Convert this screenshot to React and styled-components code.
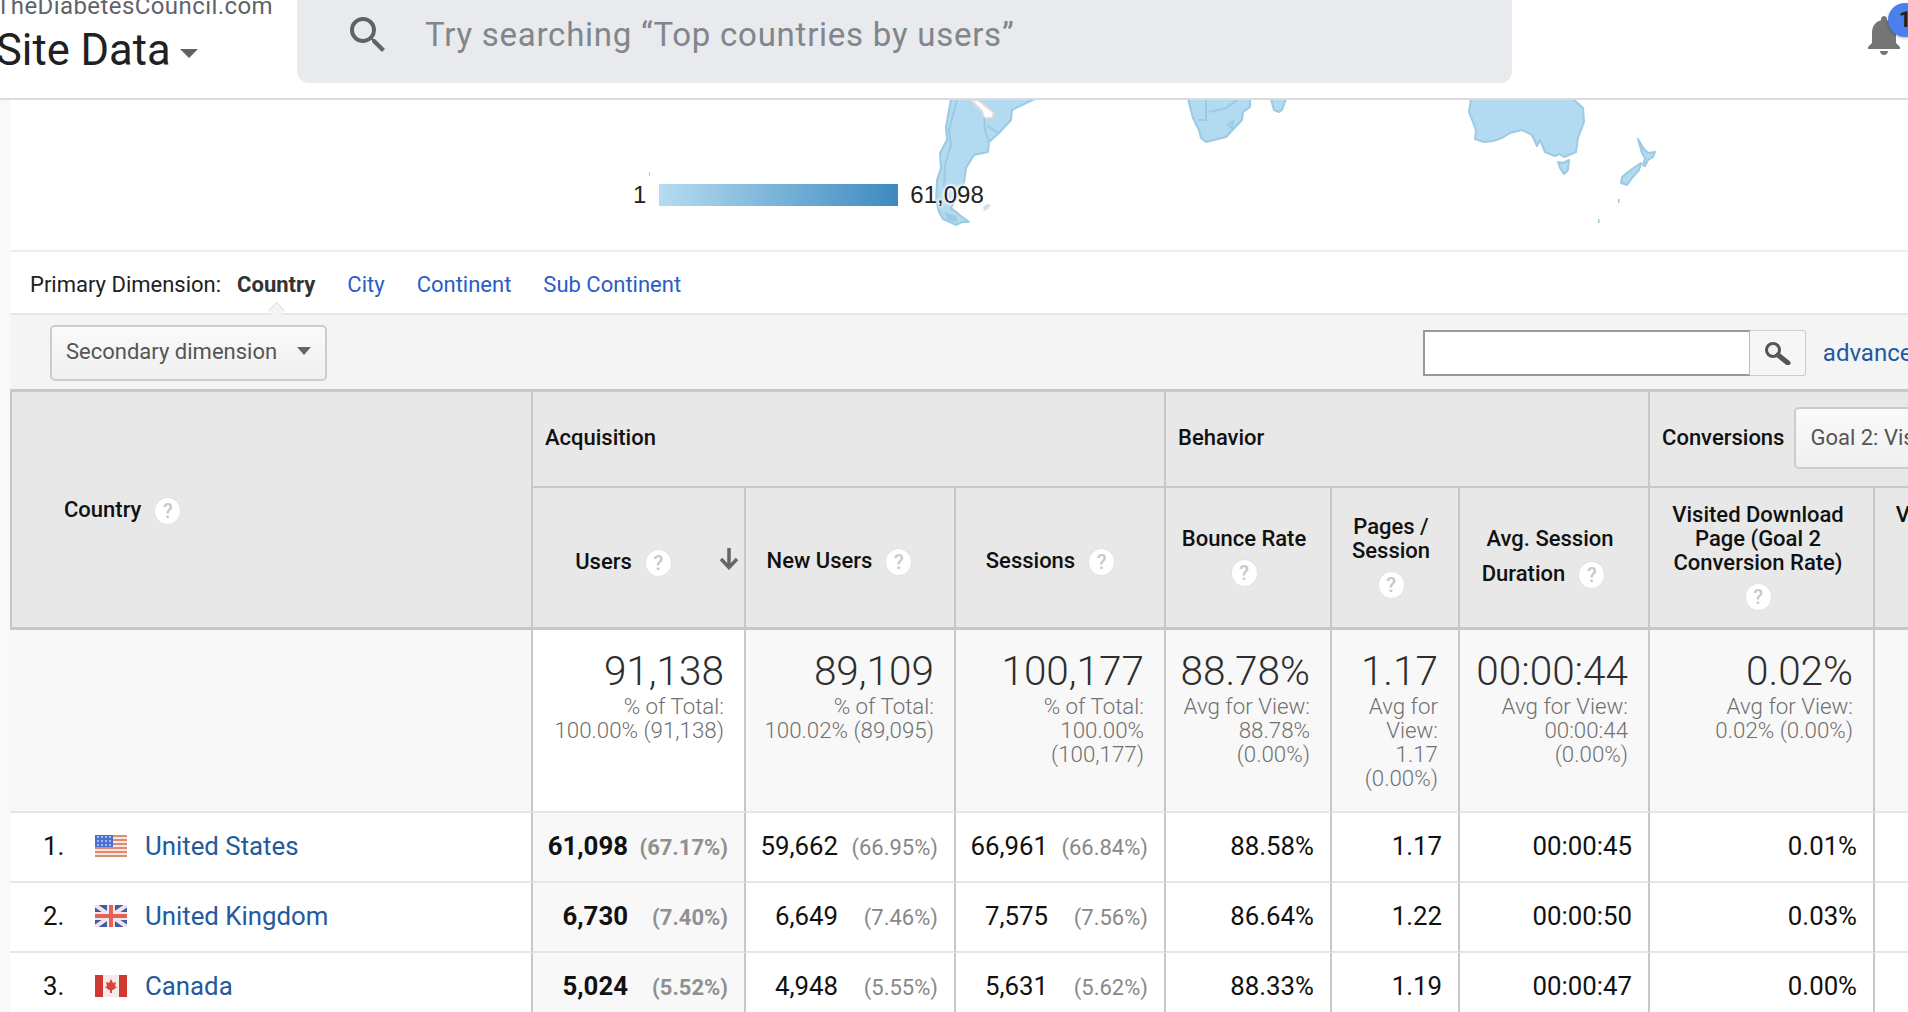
import styled, { createGlobalStyle } from "styled-components";

const GlobalStyle = createGlobalStyle`
  html, body {
    margin: 0;
    padding: 0;
    background: #fff;
    font-family: Roboto, "Liberation Sans", sans-serif;
    color: #212121;
  }
  #root {
    width: 1908px;
    height: 1012px;
    overflow: hidden;
  }
`;

const Header = styled.header`
  width: 1908px;
  height: 100px;
  box-sizing: border-box;
  border-bottom: 2px solid #dadce0;
  display: flex;
  align-items: flex-start;
  overflow: hidden;
`;

const Brand = styled.div`
  width: 297px;
  flex-shrink: 0;
  margin-left: -4px;
  margin-top: -8px;
`;

const Account = styled.div`
  font-size: 24px;
  line-height: 28px;
  color: #5f6368;
  letter-spacing: 0.42px;
  white-space: nowrap;
`;

const PropertyName = styled.div`
  display: flex;
  align-items: center;
  gap: 9px;
  font-size: 43.5px;
  line-height: 50px;
  margin-top: 6px;
  color: #212121;
  white-space: nowrap;
`;

const HeaderCaret = styled.span`
  width: 0;
  height: 0;
  margin-top: 4px;
  border-left: 9px solid transparent;
  border-right: 9px solid transparent;
  border-top: 9px solid #5f6368;
`;

const SearchBar = styled.div`
  width: 1215px;
  height: 83px;
  flex-shrink: 0;
  margin-left: 4px;
  box-sizing: border-box;
  padding: 0 0 14px 47px;
  background: #e8eaed;
  border-radius: 0 0 12px 12px;
  display: flex;
  align-items: center;
  gap: 33px;
  font-size: 33px;
  letter-spacing: 0.75px;
  color: #80868b;
  svg {
    width: 48px;
    height: 48px;
    fill: #5f6368;
  }
`;

const Bell = styled.div`
  position: relative;
  margin-left: 348px;
  margin-top: 11px;
  svg {
    display: block;
    width: 48px;
    height: 48px;
    fill: #757575;
  }
`;

const Badge = styled.span`
  position: absolute;
  left: 28px;
  top: -8px;
  width: 34px;
  height: 34px;
  border-radius: 50%;
  background: #4a80ec;
  box-shadow: 0 1px 3px rgba(0, 0, 0, 0.3);
  font-size: 22px;
  font-weight: 700;
  line-height: 34px;
  text-align: center;
  color: #202124;
`;

const Body = styled.div`
  display: flex;
`;

const Strip = styled.div`
  width: 10px;
  flex-shrink: 0;
  background: #f8f9fa;
`;

const Main = styled.main`
  width: 2090px;
  flex-shrink: 0;
`;

const MapSection = styled.section`
  position: relative;
  height: 150px;
  border-bottom: 2px solid #eeeeee;
  svg {
    display: block;
  }
`;

const Legend = styled.div`
  position: absolute;
  left: 623px;
  top: 84px;
  display: flex;
  align-items: center;
  font-family: "Liberation Sans", Arial, sans-serif;
  font-size: 24px;
  line-height: 22px;
  color: #222;
  text-shadow: 0 0 3px #fff, 0 0 3px #fff, 0 0 4px #fff, 0 0 5px #fff;
`;

const LegendBar = styled.div`
  width: 239px;
  height: 22px;
  margin: 0 12px 0 13px;
  background: linear-gradient(to right, #b5dcf0, #3d8ac0);
`;

const DimensionTabs = styled.nav`
  position: relative;
  height: 63px;
  width: 1898px;
  box-sizing: border-box;
  padding: 3px 0 0 20px;
  border-bottom: 2px solid #e6e6e6;
  display: flex;
  align-items: center;
  font-size: 22px;
`;

const DimensionLabel = styled.span`
  color: #212121;
  margin-right: 16px;
`;

const ActiveDimension = styled.span`
  position: relative;
  font-weight: 700;
  color: #333;
  margin-right: 32px;
  &::after {
    content: "";
    position: absolute;
    left: 50%;
    bottom: -21px;
    width: 14px;
    height: 14px;
    margin-left: -7px;
    background: #f4f4f4;
    border-left: 1px solid #d8d8d8;
    border-top: 1px solid #d8d8d8;
    transform: rotate(45deg) scale(0.8);
  }
`;

const DimensionLink = styled.a`
  color: #2a5cc8;
  margin-right: 32px;
`;

const Toolbar = styled.div`
  height: 74px;
  box-sizing: border-box;
  padding: 0 174px 0 40px;
  background: #f4f4f4;
  display: flex;
  align-items: center;
  justify-content: space-between;
`;

const DropButton = styled.div`
  display: flex;
  align-items: center;
  justify-content: space-between;
  box-sizing: border-box;
  background: linear-gradient(#fafafa, #f0f0f0);
  border: 2px solid #cccccc;
  border-radius: 5px;
  color: #555;
  font-size: 22px;
  white-space: nowrap;
`;

const SecondaryDrop = styled(DropButton)`
  width: 277px;
  height: 56px;
  padding: 0 14px 3px;
  margin-top: 1px;
`;

const GoalDrop = styled(DropButton)`
  width: 400px;
  height: 62px;
  padding: 0 14px;
  font-weight: 400;
`;

const DropCaret = styled.span`
  width: 0;
  height: 0;
  border-left: 7px solid transparent;
  border-right: 7px solid transparent;
  border-top: 8px solid #666;
`;

const TableSearch = styled.div`
  display: flex;
  align-items: center;
  margin-top: 2px;
`;

const SearchInput = styled.div`
  width: 327px;
  height: 46px;
  box-sizing: border-box;
  background: #fff;
  border: 2px solid #999;
  border-right: 1px solid #bbb;
`;

const SearchButton = styled.div`
  width: 56px;
  height: 46px;
  box-sizing: border-box;
  background: #f6f6f6;
  border: 1px solid #ccc;
  border-left: none;
  border-radius: 0 3px 3px 0;
  display: flex;
  align-items: center;
  justify-content: center;
`;

const Advanced = styled.a`
  margin-left: 17px;
  font-size: 24px;
  color: #1f5a9e;
`;

const Table = styled.table`
  width: 2080px;
  table-layout: fixed;
  border-collapse: separate;
  border-spacing: 0;
`;

const Help = styled.span`
  display: inline-block;
  vertical-align: middle;
  width: 27px;
  height: 28px;
  margin: 8px 13px;
  border-radius: 50%;
  background: #fff;
  border: 1px solid #e2e2e2;
  box-sizing: border-box;
  color: #c8c8c8;
  font-size: 20px;
  font-weight: 500;
  line-height: 26px;
  text-align: center;
`;

const HeadCell = styled.th`
  box-sizing: border-box;
  background: #e8e8e8;
  border-right: 2px solid #c8c8c8;
  border-bottom: 2px solid #c8c8c8;
  font-size: 22px;
  font-weight: 500;
  line-height: 24px;
  color: #111;
  padding: 0 16px;
  text-align: center;
  vertical-align: middle;
  position: relative;
`;

const CountryHead = styled(HeadCell)`
  border-left: 2px solid #c8c8c8;
  border-top: 3px solid #c8c8c8;
  border-bottom-width: 3px;
  text-align: left;
  padding: 3px 0 0 52px;
`;

const GroupHead = styled(HeadCell)`
  border-top: 3px solid #c8c8c8;
  text-align: left;
  padding: 0 0 2px 12px;
  height: 99px;
`;

const GroupInner = styled.div`
  display: flex;
  align-items: center;
  gap: 10px;
  white-space: nowrap;
`;

const MetricHead = styled(HeadCell)`
  height: 142px;
  border-bottom-width: 3px;
  padding: ${(p) => p.$top || 7}px ${(p) => p.$right || 14}px 0 ${(p) => p.$left || 14}px;
`;

const LooseMetricHead = styled(MetricHead)`
  ${Help} {
    margin-top: 10px;
    margin-bottom: 10px;
  }
`;

const SortArrow = styled.svg`
  position: absolute;
  right: 5px;
  top: 59px;
  width: 20px;
  height: 23px;
  fill: none;
  stroke: #666;
  stroke-width: 3.5;
`;

const TotalCell = styled.td`
  box-sizing: border-box;
  height: 183px;
  padding: 19px 20px 0 8px;
  background: ${(p) => (p.$white ? "#fff" : "#f8f8f8")};
  border-right: 2px solid #c8c8c8;
  border-bottom: 2px solid #e6e6e6;
  vertical-align: top;
  text-align: right;
`;

const BlankCell = styled(TotalCell)`
  border-right: none;
`;

const TotalValue = styled.div`
  font-size: 40.5px;
  font-weight: 300;
  line-height: 45px;
  color: #2e2e2e;
  white-space: nowrap;
`;

const TotalNote = styled.div`
  font-size: 22.3px;
  font-weight: 300;
  line-height: 24px;
  color: #707070;
`;

const DataCell = styled.td`
  box-sizing: border-box;
  height: 70px;
  padding: 0 16px 2px 8px;
  background: ${(p) => (p.$sorted ? "#f8f8f8" : "#fff")};
  border-right: 2px solid #c8c8c8;
  border-bottom: 2px solid #e6e6e6;
  font-size: 25.8px;
  font-weight: ${(p) => (p.$sorted ? 700 : 400)};
  text-align: right;
  color: #111;
  white-space: nowrap;
`;

const Share = styled.span`
  display: inline-block;
  width: ${(p) => (p.$sorted ? 100 : 100)}px;
  font-size: 22px;
  font-weight: ${(p) => (p.$sorted ? 700 : 400)};
  color: ${(p) => (p.$sorted ? "#909090" : "#888")};
`;

const CountryCell = styled.td`
  box-sizing: border-box;
  height: 70px;
  padding: 0 0 2px 33px;
  border-right: 2px solid #c8c8c8;
  border-bottom: 2px solid #e6e6e6;
`;

const CountryInner = styled.div`
  display: flex;
  align-items: center;
  font-size: 25.8px;
`;

const RowNumber = styled.span`
  width: 52px;
  color: #111;
`;

const Flag = styled.svg`
  width: 32px;
  height: 22px;
  margin-right: 18px;
  filter: blur(0.7px);
`;

const CountryLink = styled.a`
  color: #235a9c;
`;

function SearchGlyph() {
  return (
    <svg viewBox="0 0 24 24">
      <path d="M15.5 14h-.79l-.28-.27A6.47 6.47 0 0 0 16 9.5 6.5 6.5 0 1 0 9.5 16c1.61 0 3.09-.59 4.23-1.57l.27.28v.79l5 4.99L20.49 19l-4.99-5zm-6 0C7.01 14 5 11.99 5 9.5S7.01 5 9.5 5 14 7.01 14 9.5 11.99 14 9.5 14z" />
    </svg>
  );
}

function WorldMap() {
  return (
    <svg width="1898" height="150" viewBox="10 100 1898 150">
      <g fill="#b2daf0" stroke="#9ccae2" strokeWidth="2" strokeLinejoin="round">
        <path d="M951 99 L946 127 L947 140 L940 153 L941 168 L937 180 L936 200 L939 212 L943 219 L950 222 L956 225 L962 222 L969 222 L961 216 L951 208 L962 188 L964 182 L966 168 L974 155 L988 152 L989 142 L999 133 L1011 120 L1012 110 L1022 105 L1035 99 Z" />
        <path d="M1188 99 L1193 118 L1199 130 L1201 138 L1206 142 L1226 137 L1242 120 L1243 112 L1250 107 L1250 99 Z" />
        <path d="M1271 99 L1274 110 L1279 112 L1282 110 L1286 99 Z" />
        <path d="M1471 99 L1469 112 L1476 130 L1475 139 L1484 142 L1493 141 L1502 138 L1510 133 L1522 130 L1532 135 L1537 146 L1540 140 L1545 152 L1555 156 L1559 154 L1564 157 L1576 152 L1578 138 L1584 122 L1583 108 L1573 99 Z" />
        <path d="M1558 162 L1563 163 L1569 160 L1568 170 L1564 174 L1560 168 Z" />
        <path d="M1638 139 L1642 146 L1645 150 L1648 153 L1655 152 L1653 157 L1648 160 L1645 166 L1643 165 L1645 158 L1642 153 Z" />
        <path d="M1641 163 L1639 170 L1632 178 L1627 185 L1621 183 L1622 177 L1628 172 L1635 167 Z" />
      </g>
      <path d="M971 100 L978 100 L994 113 L992 118 L984 118 L982 111 Z" fill="#fff" stroke="#dddddd" strokeWidth="2" />
      <path d="M983 207 L987 204 L991 205 L988 209 L984 211 Z" fill="#dddddd" />
      <g fill="none" stroke="#9ccae2" strokeWidth="2">
        <path d="M957 100 L949 130 L951 145 L945 165 L944 190" />
        <path d="M984 118 L985 130 L989 142" />
        <path d="M987 126 L999 133" />
        <path d="M1206 100 L1206 120 L1198 120" />
        <path d="M1209 112 L1226 108 L1237 100" />
        <path d="M1228 125 L1233 121 L1232 128 Z" />
      </g>
      <g fill="#9ccae2">
        <path d="M944 212 L956 216 L958 222 L948 220 Z" />
        <rect x="649" y="172" width="1" height="4" />
        <rect x="1618" y="199" width="1.5" height="4" />
        <rect x="1598" y="219" width="1.5" height="4" />
      </g>
    </svg>
  );
}

function UsFlag() {
  return (
    <Flag viewBox="0 0 32 22">
      <rect width="32" height="22" fill="#f4e6e2" />
      {[0, 4, 8, 12, 16, 20].map((y) => (
        <rect key={y} y={y} width="32" height="2" fill="#e08a72" />
      ))}
      <rect width="18" height="12" fill="#4a6fd0" />
      {[2, 6, 10].map((y) =>
        [3, 7, 11, 15].map((x) => <circle key={x + "-" + y} cx={x} cy={y} r="1" fill="#c4d2f5" />)
      )}
    </Flag>
  );
}

function UkFlag() {
  return (
    <Flag viewBox="0 0 32 22">
      <rect width="32" height="22" fill="#3f5aa8" />
      <path d="M0 0 L32 22 M32 0 L0 22" stroke="#efe4e6" strokeWidth="4" />
      <rect x="12" width="8" height="22" fill="#f3e8e8" />
      <rect y="7" width="32" height="8" fill="#f3e8e8" />
      <rect x="14" width="4" height="22" fill="#e8605a" />
      <rect y="9" width="32" height="4" fill="#e8605a" />
    </Flag>
  );
}

function CaFlag() {
  return (
    <Flag viewBox="0 0 32 22">
      <rect width="32" height="22" fill="#f5eaea" />
      <rect width="8" height="22" fill="#cf3a30" />
      <rect x="24" width="8" height="22" fill="#cf3a30" />
      <path d="M16 4 L18 8 L21 7 L20 11 L22 12 L18 15 L17 15 L17 18 L15 18 L15 15 L14 15 L10 12 L12 11 L11 7 L14 8 Z" fill="#d4463c" />
    </Flag>
  );
}

const totals = [
  { value: "91,138", note: ["% of Total:", "100.00% (91,138)"], white: true },
  { value: "89,109", note: ["% of Total:", "100.02% (89,095)"] },
  { value: "100,177", note: ["% of Total:", "100.00%", "(100,177)"] },
  { value: "88.78%", note: ["Avg for View:", "88.78%", "(0.00%)"] },
  { value: "1.17", note: ["Avg for", "View:", "1.17", "(0.00%)"] },
  { value: "00:00:44", note: ["Avg for View:", "00:00:44", "(0.00%)"] },
  { value: "0.02%", note: ["Avg for View:", "0.02% (0.00%)"] },
];

const rows = [
  {
    name: "United States",
    flag: <UsFlag />,
    users: ["61,098", "(67.17%)"],
    newUsers: ["59,662", "(66.95%)"],
    sessions: ["66,961", "(66.84%)"],
    rest: ["88.58%", "1.17", "00:00:45", "0.01%"],
  },
  {
    name: "United Kingdom",
    flag: <UkFlag />,
    users: ["6,730", "(7.40%)"],
    newUsers: ["6,649", "(7.46%)"],
    sessions: ["7,575", "(7.56%)"],
    rest: ["86.64%", "1.22", "00:00:50", "0.03%"],
  },
  {
    name: "Canada",
    flag: <CaFlag />,
    users: ["5,024", "(5.52%)"],
    newUsers: ["4,948", "(5.55%)"],
    sessions: ["5,631", "(5.62%)"],
    rest: ["88.33%", "1.19", "00:00:47", "0.00%"],
  },
];

export default function App() {
  return (
    <>
      <GlobalStyle />
      <Header>
        <Brand>
          <Account>TheDiabetesCouncil.com</Account>
          <PropertyName>
            Site Data
            <HeaderCaret />
          </PropertyName>
        </Brand>
        <SearchBar>
          <SearchGlyph />
          Try searching “Top countries by users”
        </SearchBar>
        <Bell>
          <svg viewBox="0 0 24 24">
            <path d="M12 22c1.1 0 2-.9 2-2h-4c0 1.1.89 2 2 2zm6-6v-5c0-3.07-1.64-5.64-4.5-6.32V4c0-.83-.67-1.5-1.5-1.5s-1.5.67-1.5 1.5v.68C7.63 5.36 6 7.92 6 11v5l-2 2v1h16v-1l-2-2z" />
          </svg>
          <Badge>1</Badge>
        </Bell>
      </Header>
      <Body>
        <Strip />
        <Main>
          <MapSection>
            <WorldMap />
            <Legend>
              1
              <LegendBar />
              61,098
            </Legend>
          </MapSection>
          <DimensionTabs>
            <DimensionLabel>Primary Dimension:</DimensionLabel>
            <ActiveDimension>Country</ActiveDimension>
            <DimensionLink>City</DimensionLink>
            <DimensionLink>Continent</DimensionLink>
            <DimensionLink>Sub Continent</DimensionLink>
          </DimensionTabs>
          <Toolbar>
            <SecondaryDrop>
              Secondary dimension
              <DropCaret />
            </SecondaryDrop>
            <TableSearch>
              <SearchInput />
              <SearchButton>
                <svg width="28" height="24" viewBox="0 0 28 24">
                  <circle cx="10" cy="9" r="6.5" fill="#eef2f6" stroke="#555" strokeWidth="3" />
                  <path d="M15 14 L25 22" stroke="#555" strokeWidth="5" strokeLinecap="round" />
                </svg>
              </SearchButton>
              <Advanced>advanced</Advanced>
            </TableSearch>
          </Toolbar>
          <Table>
            <colgroup>
              <col style={{ width: 523 }} />
              <col style={{ width: 213 }} />
              <col style={{ width: 210 }} />
              <col style={{ width: 210 }} />
              <col style={{ width: 166 }} />
              <col style={{ width: 128 }} />
              <col style={{ width: 190 }} />
              <col style={{ width: 225 }} />
              <col style={{ width: 215 }} />
            </colgroup>
            <thead>
              <tr>
                <CountryHead rowSpan={2}>
                  Country
                  <Help>?</Help>
                </CountryHead>
                <GroupHead colSpan={3}>Acquisition</GroupHead>
                <GroupHead colSpan={3}>Behavior</GroupHead>
                <GroupHead colSpan={2}>
                  <GroupInner>
                    Conversions
                    <GoalDrop>
                      Goal 2: Visited Download Page
                      <DropCaret />
                    </GoalDrop>
                  </GroupInner>
                </GroupHead>
              </tr>
              <tr>
                <MetricHead $top={10} $right={31}>
                  Users
                  <Help>?</Help>
                  <SortArrow viewBox="0 0 20 23">
                    <path d="M10 1 L10 20 M2 12 L10 20.5 L18 12" />
                  </SortArrow>
                </MetricHead>
                <MetricHead $top={9} $right={22}>
                  New Users
                  <Help>?</Help>
                </MetricHead>
                <MetricHead $top={9} $right={20}>
                  Sessions
                  <Help>?</Help>
                </MetricHead>
                <MetricHead $left={10} $right={18}>
                  Bounce Rate
                  <Help>?</Help>
                </MetricHead>
                <MetricHead $left={10} $right={18}>
                  Pages / Session
                  <Help>?</Help>
                </MetricHead>
                <LooseMetricHead $top={11} $right={22}>
                  Avg. Session Duration
                  <Help>?</Help>
                </LooseMetricHead>
                <MetricHead $right={21}>
                  Visited Download Page (Goal 2 Conversion Rate)
                  <Help>?</Help>
                </MetricHead>
                <MetricHead>
                  Visited Download Page (Goal 2 Completions)
                  <Help>?</Help>
                </MetricHead>
              </tr>
            </thead>
            <tbody>
              <tr>
                <TotalCell />
                {totals.map((t) => (
                  <TotalCell key={t.value} $white={t.white}>
                    <TotalValue>{t.value}</TotalValue>
                    {t.note.map((line) => (
                      <TotalNote key={line}>{line}</TotalNote>
                    ))}
                  </TotalCell>
                ))}
                <BlankCell />
              </tr>
              {rows.map((row, i) => (
                <tr key={row.name}>
                  <CountryCell>
                    <CountryInner>
                      <RowNumber>{i + 1}.</RowNumber>
                      {row.flag}
                      <CountryLink>{row.name}</CountryLink>
                    </CountryInner>
                  </CountryCell>
                  <DataCell $sorted>
                    {row.users[0]}
                    <Share $sorted>{row.users[1]}</Share>
                  </DataCell>
                  <DataCell>
                    {row.newUsers[0]}
                    <Share>{row.newUsers[1]}</Share>
                  </DataCell>
                  <DataCell>
                    {row.sessions[0]}
                    <Share>{row.sessions[1]}</Share>
                  </DataCell>
                  {row.rest.map((value, n) => (
                    <DataCell key={n}>{value}</DataCell>
                  ))}
                  <DataCell />
                </tr>
              ))}
            </tbody>
          </Table>
        </Main>
      </Body>
    </>
  );
}
